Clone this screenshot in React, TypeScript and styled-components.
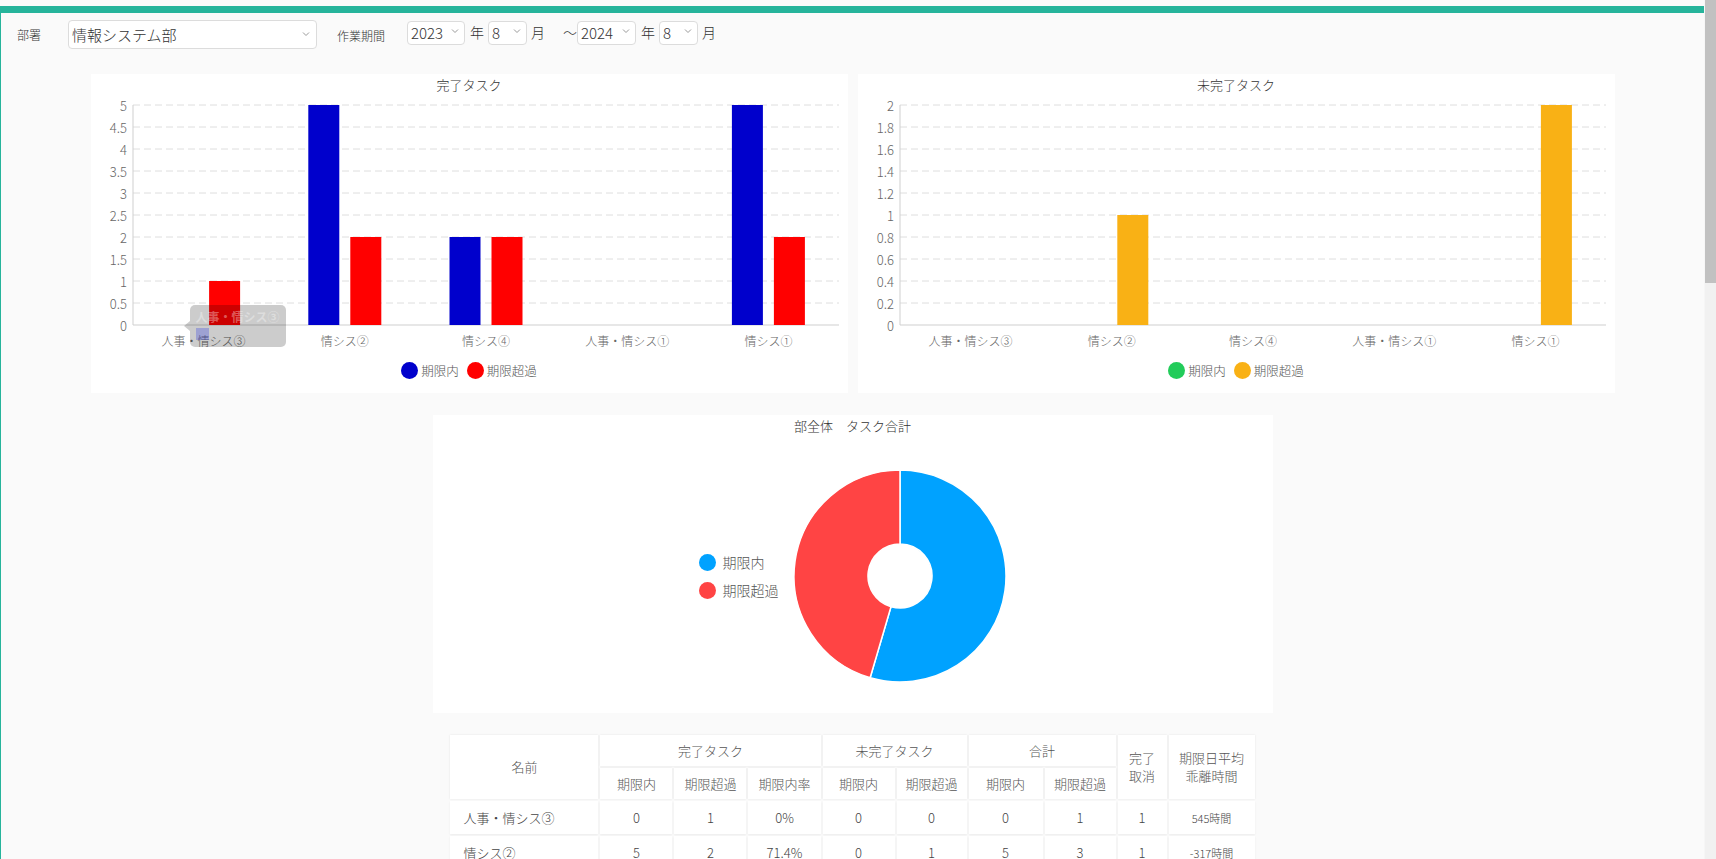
import React from "react";
import styled, { createGlobalStyle } from "styled-components";

const FONT = `"Noto Sans CJK JP", "Noto Sans", "Liberation Sans", sans-serif`;
const TEAL = "#26b49b";

const GlobalStyle = createGlobalStyle`
  html, body { margin: 0; padding: 0; height: 100%; overflow: hidden; background: #fafafa; }
  #root { height: 100%; }
  * { box-sizing: border-box; }
`;

const Viewport = styled.div`
  display: flex;
  height: 100vh;
  overflow: hidden;
  background: #fafafa;
  font-family: ${FONT};
  font-weight: 300;
  color: #333;
`;

const Content = styled.div`
  flex: 1;
  min-width: 0;
  overflow: hidden;
  padding-top: 6px;
`;

const ScrollRail = styled.div`
  width: 12px;
  flex: none;
  background: #f1f1f1;
  border-left: 1px solid #f6f6f6;
`;

const ScrollThumb = styled.div`
  height: 283px;
  background: #c1c1c1;
`;

const Frame = styled.div`
  border-top: 7px solid ${TEAL};
  border-left: 1px solid ${TEAL};
  min-height: 100%;
`;

/* ---------- filter bar ---------- */
const FilterBar = styled.div`
  display: flex;
  align-items: flex-start;
  height: 61px;
  padding: 7px 0 0 16px;
`;

const FieldLabel = styled.span<{ $w?: number; $pt?: number }>`
  display: inline-block;
  width: ${(p) => (p.$w ? `${p.$w}px` : "auto")};
  font-size: 12px;
  line-height: 16px;
  padding-top: ${(p) => p.$pt ?? 0}px;
  color: #333;
  white-space: nowrap;
`;

const DeptGroup = styled.div`
  display: flex;
  align-items: center;
  height: 29px;
`;

const PeriodGroup = styled.div`
  display: flex;
  align-items: center;
  height: 24px;
  margin-left: 20px;
`;

const SelectWrap = styled.div<{ $w: number; $h: number; $ml?: number }>`
  position: relative;
  width: ${(p) => p.$w}px;
  height: ${(p) => p.$h}px;
  margin-left: ${(p) => p.$ml ?? 0}px;
  flex: none;
`;

const NativeSelect = styled.select<{ $fs: number }>`
  appearance: none;
  -webkit-appearance: none;
  width: 100%;
  height: 100%;
  border: 1px solid #dcdcdc;
  border-radius: 4px;
  background: #fff;
  font-family: ${FONT};
  font-weight: 300;
  font-size: ${(p) => p.$fs}px;
  color: #333;
  padding: 0 0 0 3px;
  outline: none;
`;

const Chevron = styled.svg<{ $right: number }>`
  position: absolute;
  right: ${(p) => p.$right}px;
  top: 50%;
  margin-top: -4px;
  pointer-events: none;
`;

const Unit = styled.span<{ $ml?: number }>`
  font-size: 14px;
  color: #333;
  margin-left: ${(p) => p.$ml ?? 4}px;
  line-height: 16px;
`;

const ChevronIcon = ({ right }: { right: number }) => (
  <Chevron $right={right} width="8" height="6" viewBox="0 0 8 6">
    <polyline points="1,1.5 4,4.5 7,1.5" fill="none" stroke="#9a9a9a" strokeWidth="1" />
  </Chevron>
);

type SelProps = { w: number; h: number; fs: number; value: string; options: string[]; ml?: number; chevronRight: number };
const Select = ({ w, h, fs, value, options, ml, chevronRight }: SelProps) => (
  <SelectWrap $w={w} $h={h} $ml={ml}>
    <NativeSelect $fs={fs} defaultValue={value}>
      {options.map((o) => (
        <option key={o} value={o}>
          {o}
        </option>
      ))}
    </NativeSelect>
    <ChevronIcon right={chevronRight} />
  </SelectWrap>
);

/* ---------- chart cards ---------- */
const ChartsRow = styled.div`
  display: flex;
  justify-content: center;
  gap: 10px;
`;

const ChartCard = styled.div<{ $w: number; $h: number }>`
  position: relative;
  width: ${(p) => p.$w}px;
  height: ${(p) => p.$h}px;
  background: #fff;
  padding-top: 3px;
  display: flex;
  flex-direction: column;
  flex: none;
`;

const ChartTitle = styled.div`
  font-size: 13px;
  line-height: 16px;
  text-align: center;
  color: #333;
`;

const Legend = styled.div`
  display: flex;
  justify-content: center;
  align-items: center;
  height: 30px;
  gap: 8px;
`;

const LegendItem = styled.div<{ $fs: number; $gap: number }>`
  display: flex;
  align-items: center;
  gap: ${(p) => p.$gap}px;
  font-size: ${(p) => p.$fs}px;
  color: #555;
`;

const LegendDot = styled.span<{ $color: string }>`
  width: 17px;
  height: 17px;
  border-radius: 50%;
  background: ${(p) => p.$color};
  flex: none;
`;

const ChartSvg = styled.svg`
  display: block;
  font-family: ${FONT};
  font-weight: 300;
  flex: none;
`;

const Tooltip = styled.div`
  position: absolute;
  left: 99px;
  top: 231px;
  width: 96px;
  height: 42px;
  border-radius: 5px;
  background: rgba(0, 0, 0, 0.2);
  padding: 4px 0 0 6px;
  font-size: 12px;
  font-weight: bold;
  color: rgba(255, 255, 255, 0.35);
  line-height: 16px;
  &::before {
    content: "";
    position: absolute;
    left: -6px;
    top: 16px;
    border-style: solid;
    border-width: 5px 6px 5px 0;
    border-color: transparent rgba(0, 0, 0, 0.2) transparent transparent;
  }
`;

const TooltipSwatch = styled.span`
  display: block;
  margin-top: 3px;
  width: 13px;
  height: 12px;
  background: rgba(70, 80, 220, 0.35);
`;

type BarChartProps = {
  categories: string[];
  data: [number, number][];
  colors: [string, string];
  max: number;
  step: number;
};

const BarChart = ({ categories, data, colors, max, step }: BarChartProps) => {
  const W = 757;
  const H = 262;
  const x0 = 42;
  const x1 = 748;
  const yTop = 12;
  const yBot = 232;
  const cw = (x1 - x0) / categories.length;
  const ph = yBot - yTop;
  const ticks = Array.from({ length: 11 }, (_, i) => i);
  const fmt = (v: number) => String(parseFloat(v.toFixed(2)));
  return (
    <ChartSvg width={W} height={H} viewBox={`0 0 ${W} ${H}`}>
      {ticks.map((i) => {
        const y = yBot - (i * ph) / 10;
        return (
          <g key={i}>
            {i > 0 && <line x1={x0} x2={x1} y1={y} y2={y} stroke="#dedede" strokeDasharray="7 4" />}
            <text x={36} y={y} textAnchor="end" dominantBaseline="central" fontSize="13" fill="#666">
              {fmt(i * step)}
            </text>
          </g>
        );
      })}
      <line x1={x0} x2={x0} y1={yTop} y2={yBot} stroke="#cfcfcf" />
      <line x1={x0} x2={x1} y1={yBot} y2={yBot} stroke="#cfcfcf" />
      {data.map(([a, b], i) => {
        const c = x0 + cw * (i + 0.5);
        const ha = (a / max) * ph;
        const hb = (b / max) * ph;
        return (
          <g key={i}>
            {a > 0 && <rect x={c - 36.5} y={yBot - ha} width={31} height={ha} fill={colors[0]} />}
            {b > 0 && <rect x={c + 5.5} y={yBot - hb} width={31} height={hb} fill={colors[1]} />}
          </g>
        );
      })}
      {categories.map((cat, i) => (
        <text key={cat} x={x0 + cw * (i + 0.5)} y={247} textAnchor="middle" dominantBaseline="central" fontSize="12" fill="#666">
          {cat}
        </text>
      ))}
    </ChartSvg>
  );
};

/* ---------- donut ---------- */
const DonutCard = styled(ChartCard)`
  margin: 22px auto 0;
`;

const DonutBody = styled.div`
  display: flex;
  justify-content: center;
  align-items: center;
  gap: 14px;
  padding-top: 35px;
`;

const DonutLegend = styled.div`
  display: flex;
  flex-direction: column;
  gap: 8px;
`;

const polar = (cx: number, cy: number, r: number, deg: number) => {
  const a = (deg * Math.PI) / 180;
  return [cx + r * Math.sin(a), cy - r * Math.cos(a)];
};

const arc = (cx: number, cy: number, r0: number, r1: number, a0: number, a1: number) => {
  const large = a1 - a0 > 180 ? 1 : 0;
  const [ox0, oy0] = polar(cx, cy, r1, a0);
  const [ox1, oy1] = polar(cx, cy, r1, a1);
  const [ix1, iy1] = polar(cx, cy, r0, a1);
  const [ix0, iy0] = polar(cx, cy, r0, a0);
  return `M${ox0} ${oy0} A${r1} ${r1} 0 ${large} 1 ${ox1} ${oy1} L${ix1} ${iy1} A${r0} ${r0} 0 ${large} 0 ${ix0} ${iy0} Z`;
};

const Donut = ({ values, colors }: { values: number[]; colors: string[] }) => {
  const total = values.reduce((s, v) => s + v, 0);
  let acc = 0;
  return (
    <ChartSvg width={214} height={214} viewBox="0 0 214 214">
      {values.map((v, i) => {
        const a0 = (acc / total) * 360;
        acc += v;
        const a1 = (acc / total) * 360;
        return <path key={i} d={arc(107, 107, 32, 106, a0, a1)} fill={colors[i]} stroke="#fff" strokeWidth="1.5" />;
      })}
    </ChartSvg>
  );
};

/* ---------- table ---------- */
const Table = styled.table`
  margin: 20px auto 0;
  border-collapse: separate;
  border-spacing: 2px;
  table-layout: fixed;
  width: 808px;
  font-family: ${FONT};
  font-weight: 300;
`;

const HeadCell = styled.th<{ $h?: number }>`
  background: #fff;
  height: ${(p) => p.$h ?? 31}px;
  padding: 0;
  font-size: 13px;
  font-weight: 300;
  color: #555;
  text-align: center;
  line-height: 18px;
  box-shadow: 0 0 2px rgba(0, 0, 0, 0.09);
`;

const BodyCell = styled.td<{ $align?: string; $fs?: number }>`
  background: #fff;
  height: 33px;
  padding: ${(p) => (p.$align === "left" ? "0 0 0 13px" : "0")};
  font-size: ${(p) => p.$fs ?? 13}px;
  color: #444;
  text-align: ${(p) => p.$align ?? "center"};
  box-shadow: 0 1px 2px rgba(0, 0, 0, 0.06);
  white-space: nowrap;
`;

const colWidths = [148, 72, 72, 72, 72, 70, 74, 71, 49, 86];

const rows: string[][] = [
  ["人事・情シス③", "0", "1", "0%", "0", "0", "0", "1", "1", "545時間"],
  ["情シス②", "5", "2", "71.4%", "0", "1", "5", "3", "1", "-317時間"],
  ["情シス④", "2", "2", "50%", "0", "0", "2", "2", "0", "128時間"],
  ["人事・情シス①", "0", "0", "-", "0", "0", "0", "0", "0", "0時間"],
  ["情シス①", "5", "2", "71.4%", "0", "2", "5", "4", "2", "-85時間"],
];

const categories = ["人事・情シス③", "情シス②", "情シス④", "人事・情シス①", "情シス①"];

export default function App() {
  return (
    <>
      <GlobalStyle />
      <Viewport>
        <Content>
          <Frame>
            <FilterBar>
              <DeptGroup>
                <FieldLabel $w={51}>部署</FieldLabel>
                <Select w={249} h={29} fs={15} value="情報システム部" options={["情報システム部", "人事部", "総務部"]} chevronRight={7} />
              </DeptGroup>
              <PeriodGroup>
                <FieldLabel $pt={7}>作業期間</FieldLabel>
                <Select w={58} h={24} fs={15} value="2023" options={["2022", "2023", "2024"]} ml={22} chevronRight={6} />
                <Unit $ml={5}>年</Unit>
                <Select w={39} h={24} fs={15} value="8" options={["6", "7", "8", "9"]} ml={4} chevronRight={6} />
                <Unit $ml={4}>月</Unit>
                <Unit $ml={18}>～</Unit>
                <Select w={59} h={24} fs={15} value="2024" options={["2023", "2024", "2025"]} ml={0} chevronRight={6} />
                <Unit $ml={5}>年</Unit>
                <Select w={39} h={24} fs={15} value="8" options={["6", "7", "8", "9"]} ml={4} chevronRight={6} />
                <Unit $ml={4}>月</Unit>
              </PeriodGroup>
            </FilterBar>

            <ChartsRow>
              <ChartCard $w={757} $h={319}>
                <ChartTitle>完了タスク</ChartTitle>
                <BarChart
                  categories={categories}
                  data={[
                    [0, 1],
                    [5, 2],
                    [2, 2],
                    [0, 0],
                    [5, 2],
                  ]}
                  colors={["#0000cc", "#ff0000"]}
                  max={5}
                  step={0.5}
                />
                <Legend>
                  <LegendItem $fs={12.5} $gap={3}>
                    <LegendDot $color="#0000cc" />
                    期限内
                  </LegendItem>
                  <LegendItem $fs={12.5} $gap={3}>
                    <LegendDot $color="#ff0000" />
                    期限超過
                  </LegendItem>
                </Legend>
                <Tooltip>
                  人事・情シス③
                  <TooltipSwatch />
                </Tooltip>
              </ChartCard>
              <ChartCard $w={757} $h={319}>
                <ChartTitle>未完了タスク</ChartTitle>
                <BarChart
                  categories={categories}
                  data={[
                    [0, 0],
                    [0, 1],
                    [0, 0],
                    [0, 0],
                    [0, 2],
                  ]}
                  colors={["#22cc5a", "#f9b115"]}
                  max={2}
                  step={0.2}
                />
                <Legend>
                  <LegendItem $fs={12.5} $gap={3}>
                    <LegendDot $color="#22cc5a" />
                    期限内
                  </LegendItem>
                  <LegendItem $fs={12.5} $gap={3}>
                    <LegendDot $color="#f9b115" />
                    期限超過
                  </LegendItem>
                </Legend>
              </ChartCard>
            </ChartsRow>

            <DonutCard $w={840} $h={298}>
              <ChartTitle>部全体　タスク合計</ChartTitle>
              <DonutBody>
                <DonutLegend>
                  <LegendItem $fs={14} $gap={7}>
                    <LegendDot $color="#00a2ff" />
                    期限内
                  </LegendItem>
                  <LegendItem $fs={14} $gap={7}>
                    <LegendDot $color="#ff4444" />
                    期限超過
                  </LegendItem>
                </DonutLegend>
                <Donut values={[12, 10]} colors={["#00a2ff", "#ff4444"]} />
              </DonutBody>
            </DonutCard>

            <Table>
              <colgroup>
                {colWidths.map((w, i) => (
                  <col key={i} style={{ width: w }} />
                ))}
              </colgroup>
              <thead>
                <tr>
                  <HeadCell rowSpan={2}>名前</HeadCell>
                  <HeadCell colSpan={3}>完了タスク</HeadCell>
                  <HeadCell colSpan={2}>未完了タスク</HeadCell>
                  <HeadCell colSpan={2}>合計</HeadCell>
                  <HeadCell rowSpan={2}>
                    完了
                    <br />
                    取消
                  </HeadCell>
                  <HeadCell rowSpan={2}>
                    期限日平均
                    <br />
                    乖離時間
                  </HeadCell>
                </tr>
                <tr>
                  <HeadCell>期限内</HeadCell>
                  <HeadCell>期限超過</HeadCell>
                  <HeadCell>期限内率</HeadCell>
                  <HeadCell>期限内</HeadCell>
                  <HeadCell>期限超過</HeadCell>
                  <HeadCell>期限内</HeadCell>
                  <HeadCell>期限超過</HeadCell>
                </tr>
              </thead>
              <tbody>
                {rows.map((r) => (
                  <tr key={r[0]}>
                    {r.map((v, i) => (
                      <BodyCell key={i} $align={i === 0 ? "left" : "center"} $fs={i === 9 ? 11 : 13}>
                        {v}
                      </BodyCell>
                    ))}
                  </tr>
                ))}
              </tbody>
            </Table>
          </Frame>
        </Content>
        <ScrollRail>
          <ScrollThumb />
        </ScrollRail>
      </Viewport>
    </>
  );
}
